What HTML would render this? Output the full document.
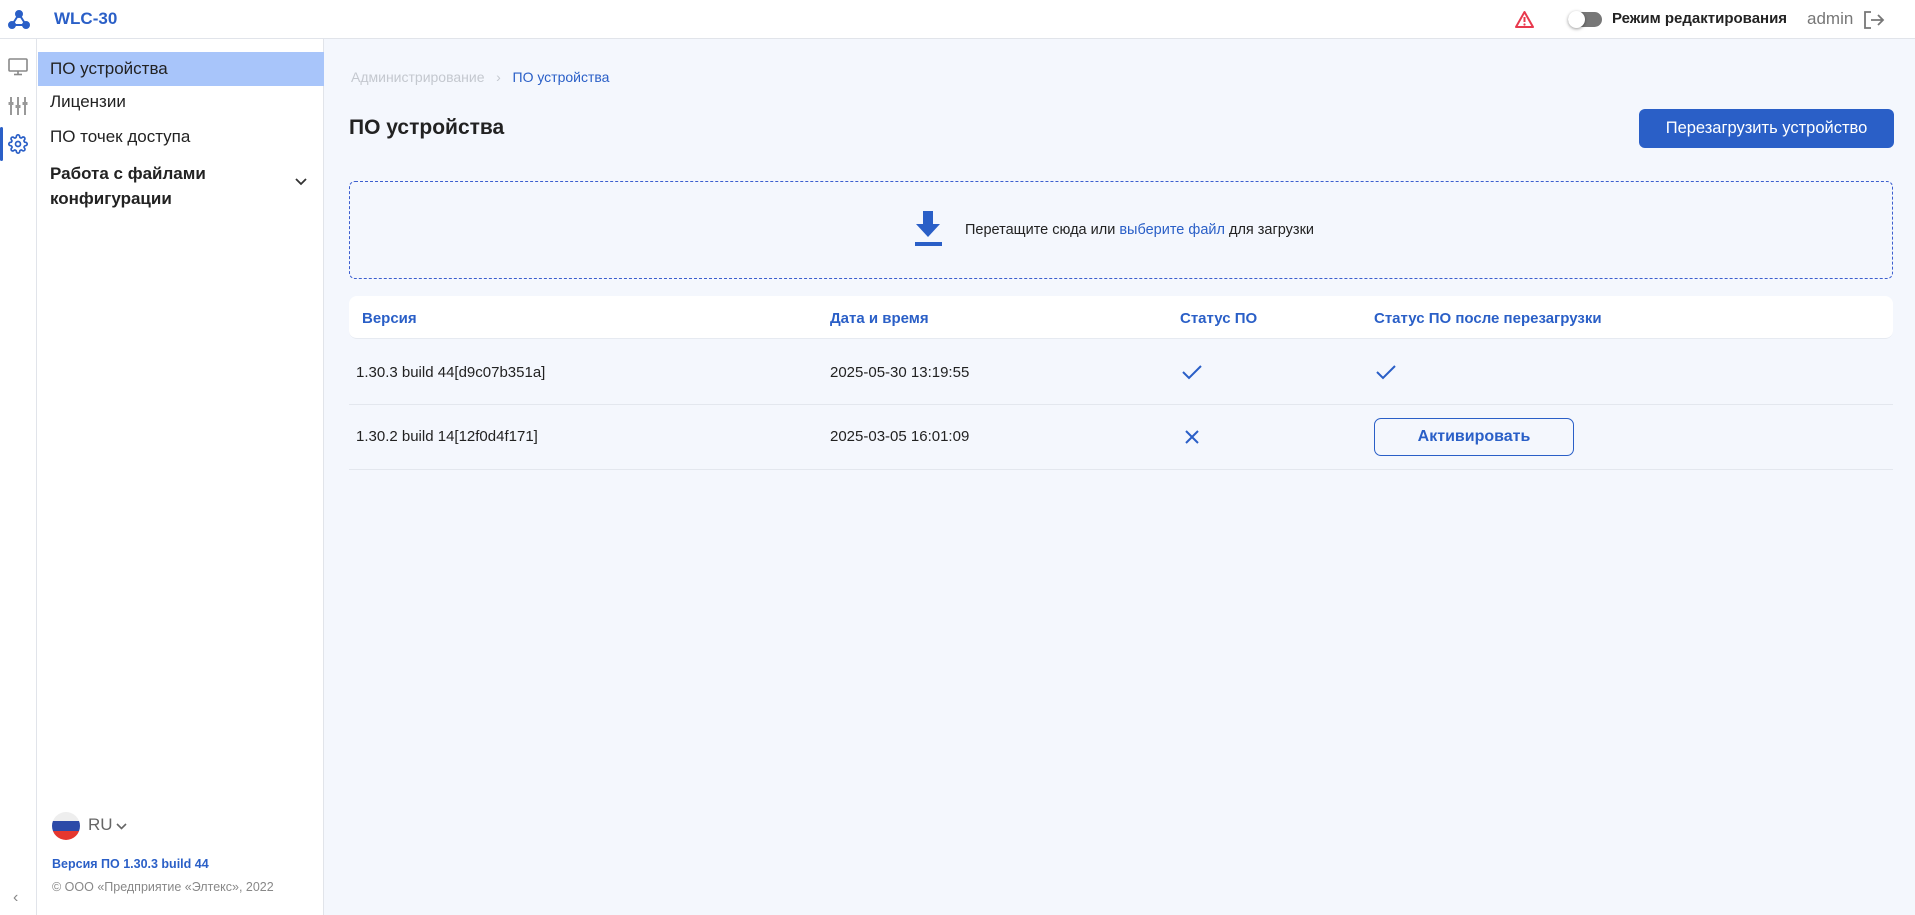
<!DOCTYPE html>
<html><head><meta charset="utf-8"><style>
*{box-sizing:border-box;margin:0;padding:0}
body{width:1915px;height:915px;overflow:hidden;font-family:"Liberation Sans","Noto Sans CJK SC",sans-serif;background:#f4f7fd;color:#222;position:relative}
.abs{position:absolute}
.hdr{left:0;top:0;width:1915px;height:39px;background:#fff;border-bottom:1px solid #e1e4ea}
.side1{left:0;top:39px;width:37px;height:876px;background:#fff;border-right:1px solid #e1e4ea}
.side2{left:37px;top:39px;width:287px;height:876px;background:#fff;border-right:1px solid #e1e4ea}
.mi{position:absolute;left:38px;width:286px;font-size:17px;color:#222;padding-left:12px}
.th{position:absolute;top:310px;font-size:15px;color:#2a5fc7;font-weight:bold}
.td{position:absolute;font-size:15px;color:#222}
.line{position:absolute;left:349px;width:1544px;height:1px;background:#e3e7ee}
</style></head><body>
<div class="abs hdr"></div>
<svg class="abs" style="left:8px;top:10px" width="22" height="20" viewBox="0 0 22 20"><g stroke="#2a5fc7" stroke-width="2" fill="#2a5fc7"><line x1="11" y1="4" x2="4" y2="15"/><line x1="11" y1="4" x2="18" y2="15"/><line x1="4" y1="15" x2="18" y2="15"/><circle cx="11" cy="4" r="3"/><circle cx="4" cy="15" r="3"/><circle cx="18" cy="15" r="3"/></g></svg>
<div class="abs" style="left:54px;top:9px;font-size:17px;font-weight:bold;color:#2a5fc7">WLC-30</div>
<svg class="abs" style="left:1514px;top:10px" width="21" height="19" viewBox="0 0 21 19"><path d="M10.5 2 L19 17 H2 Z" fill="none" stroke="#e8394d" stroke-width="2" stroke-linejoin="round"/><line x1="10.5" y1="7" x2="10.5" y2="12" stroke="#e8394d" stroke-width="2"/><circle cx="10.5" cy="14.5" r="1.1" fill="#e8394d"/></svg>
<div class="abs" style="left:1568px;top:12px;width:34px;height:15px;border-radius:8px;background:#777"></div>
<div class="abs" style="left:1568px;top:11px;width:17px;height:17px;border-radius:50%;background:#fff;box-shadow:0 1px 3px rgba(0,0,0,.4)"></div>
<div class="abs" style="left:1612px;top:10px;font-size:15px;font-weight:bold;color:#222">Режим редактирования</div>
<div class="abs" style="left:1807px;top:9px;font-size:17px;color:#777">admin</div>
<svg class="abs" style="left:1863px;top:10px" width="22" height="20" viewBox="0 0 22 20" fill="none" stroke="#777" stroke-width="1.8"><path d="M8 2H2V18H8"/><path d="M8 10H20M15 5L20 10L15 15"/></svg>

<div class="abs side1"></div>
<svg class="abs" style="left:8px;top:58px" width="20" height="18" viewBox="0 0 20 18" fill="none" stroke="#888" stroke-width="1.6"><rect x="1" y="1" width="18" height="12" rx="1"/><line x1="10" y1="13" x2="10" y2="16"/><line x1="6" y1="16.5" x2="14" y2="16.5"/></svg>
<svg class="abs" style="left:8px;top:97px" width="20" height="18" viewBox="0 0 20 18" fill="#999"><rect x="2" y="0" width="2" height="18"/><rect x="9" y="0" width="2" height="18"/><rect x="16" y="0" width="2" height="18"/><rect x="0.5" y="5" width="5" height="3"/><rect x="7.5" y="8" width="5" height="3"/><rect x="14.5" y="5" width="5" height="3"/></svg>
<div class="abs" style="left:0;top:127px;width:3px;height:34px;background:#2a5fc7;border-radius:2px"></div>
<svg class="abs" style="left:8px;top:134px" width="20" height="20" viewBox="0 0 24 24" fill="none" stroke="#2a5fc7" stroke-width="2"><circle cx="12" cy="12" r="3"/><path d="M19.4 15a1.65 1.65 0 0 0 .33 1.82l.06.06a2 2 0 1 1-2.83 2.83l-.06-.06a1.65 1.65 0 0 0-1.82-.33 1.65 1.65 0 0 0-1 1.51V21a2 2 0 1 1-4 0v-.09A1.65 1.65 0 0 0 9 19.4a1.65 1.65 0 0 0-1.82.33l-.06.06a2 2 0 1 1-2.83-2.83l.06-.06A1.65 1.65 0 0 0 4.68 15a1.65 1.65 0 0 0-1.51-1H3a2 2 0 1 1 0-4h.09A1.65 1.65 0 0 0 4.6 9a1.65 1.65 0 0 0-.33-1.82l-.06-.06a2 2 0 1 1 2.83-2.83l.06.06A1.65 1.65 0 0 0 9 4.68 1.65 1.65 0 0 0 10 3.17V3a2 2 0 1 1 4 0v.09a1.65 1.65 0 0 0 1 1.51 1.65 1.65 0 0 0 1.82-.33l.06-.06a2 2 0 1 1 2.83 2.83l-.06.06A1.65 1.65 0 0 0 19.4 9a1.65 1.65 0 0 0 1.51 1H21a2 2 0 1 1 0 4h-.09a1.65 1.65 0 0 0-1.51 1z"/></svg>
<div class="abs" style="left:13px;top:889px;color:#888;font-size:16px">‹</div>

<div class="abs side2"></div>
<div class="mi" style="top:52px;height:34px;line-height:34px;background:#a8c5fa">ПО устройства</div>
<div class="mi" style="top:92px">Лицензии</div>
<div class="mi" style="top:127px">ПО точек доступа</div>
<div class="mi" style="top:161px;font-weight:bold;line-height:25px">Работа с файлами<br>конфигурации</div>
<svg class="abs" style="left:295px;top:178px" width="12" height="8" viewBox="0 0 12 8" fill="none" stroke="#333" stroke-width="1.8"><path d="M1 1L6 6L11 1"/></svg>
<div class="abs" style="left:52px;top:812px;width:28px;height:28px;border-radius:50%;overflow:hidden"><div style="height:9px;background:#eee"></div><div style="height:10px;background:#2c4aa8"></div><div style="height:9px;background:#e5372f"></div></div>
<div class="abs" style="left:88px;top:815px;font-size:17px;color:#666">RU</div>
<svg class="abs" style="left:116px;top:823px" width="11" height="7" viewBox="0 0 11 7" fill="none" stroke="#666" stroke-width="1.6"><path d="M1 1L5.5 5.5L10 1"/></svg>
<div class="abs" style="left:52px;top:857px;font-size:12.5px;font-weight:bold;color:#2a5fc7">Версия ПО 1.30.3 build 44</div>
<div class="abs" style="left:52px;top:880px;font-size:12.5px;color:#888">© ООО «Предприятие «Элтекс», 2022</div>

<div class="abs" style="left:351px;top:69px;font-size:14px;color:#c4c8cf">Администрирование &nbsp;&nbsp;›&nbsp;&nbsp; <span style="color:#2a5fc7">ПО устройства</span></div>
<div class="abs" style="left:349px;top:116px;font-size:21px;font-weight:bold;color:#222">ПО устройства</div>
<div class="abs" style="left:1639px;top:109px;width:255px;height:39px;background:#2a5fc7;border-radius:6px;color:#fff;font-size:16.5px;text-align:center;line-height:39px">Перезагрузить устройство</div>

<div class="abs" style="left:349px;top:181px;width:1544px;height:98px;border:1px dashed #3c5fcf;border-radius:6px"></div>
<svg class="abs" style="left:913px;top:211px" width="30" height="36" viewBox="0 0 30 36" fill="#2a5fc7"><rect x="10" y="0" width="10" height="14"/><path d="M3 13H27L15 26Z"/><rect x="2" y="31" width="27" height="4"/></svg>
<div class="abs" style="left:965px;top:222px;font-size:14.5px;color:#222">Перетащите сюда или <span style="color:#2a5fc7">выберите файл</span> для загрузки</div>

<div class="abs" style="left:349px;top:296px;width:1544px;height:43px;background:#fff;border-radius:8px;border-bottom:1px solid #e6eaf1"></div>
<div class="th" style="left:362px">Версия</div>
<div class="th" style="left:830px">Дата и время</div>
<div class="th" style="left:1180px">Статус ПО</div>
<div class="th" style="left:1374px">Статус ПО после перезагрузки</div>
<div class="td" style="left:356px;top:364px">1.30.3 build 44[d9c07b351a]</div>
<div class="td" style="left:830px;top:364px">2025-05-30 13:19:55</div>
<svg class="abs" style="left:1182px;top:364px" width="20" height="16" viewBox="0 0 20 16" fill="none" stroke="#2a5fc7" stroke-width="2"><path d="M1 8L7 14L19 2"/></svg>
<svg class="abs" style="left:1376px;top:364px" width="20" height="16" viewBox="0 0 20 16" fill="none" stroke="#2a5fc7" stroke-width="2"><path d="M1 8L7 14L19 2"/></svg>
<div class="line" style="top:404px"></div>
<div class="td" style="left:356px;top:428px">1.30.2 build 14[12f0d4f171]</div>
<div class="td" style="left:830px;top:428px">2025-03-05 16:01:09</div>
<svg class="abs" style="left:1184px;top:429px" width="16" height="16" viewBox="0 0 16 16" fill="none" stroke="#2a5fc7" stroke-width="2"><path d="M2 2L14 14M14 2L2 14"/></svg>
<div class="abs" style="left:1374px;top:418px;width:200px;height:38px;border:1px solid #2a5fc7;border-radius:7px;color:#2a5fc7;font-size:16px;font-weight:bold;text-align:center;line-height:36px">Активировать</div>
<div class="line" style="top:469px"></div>
</body></html>
